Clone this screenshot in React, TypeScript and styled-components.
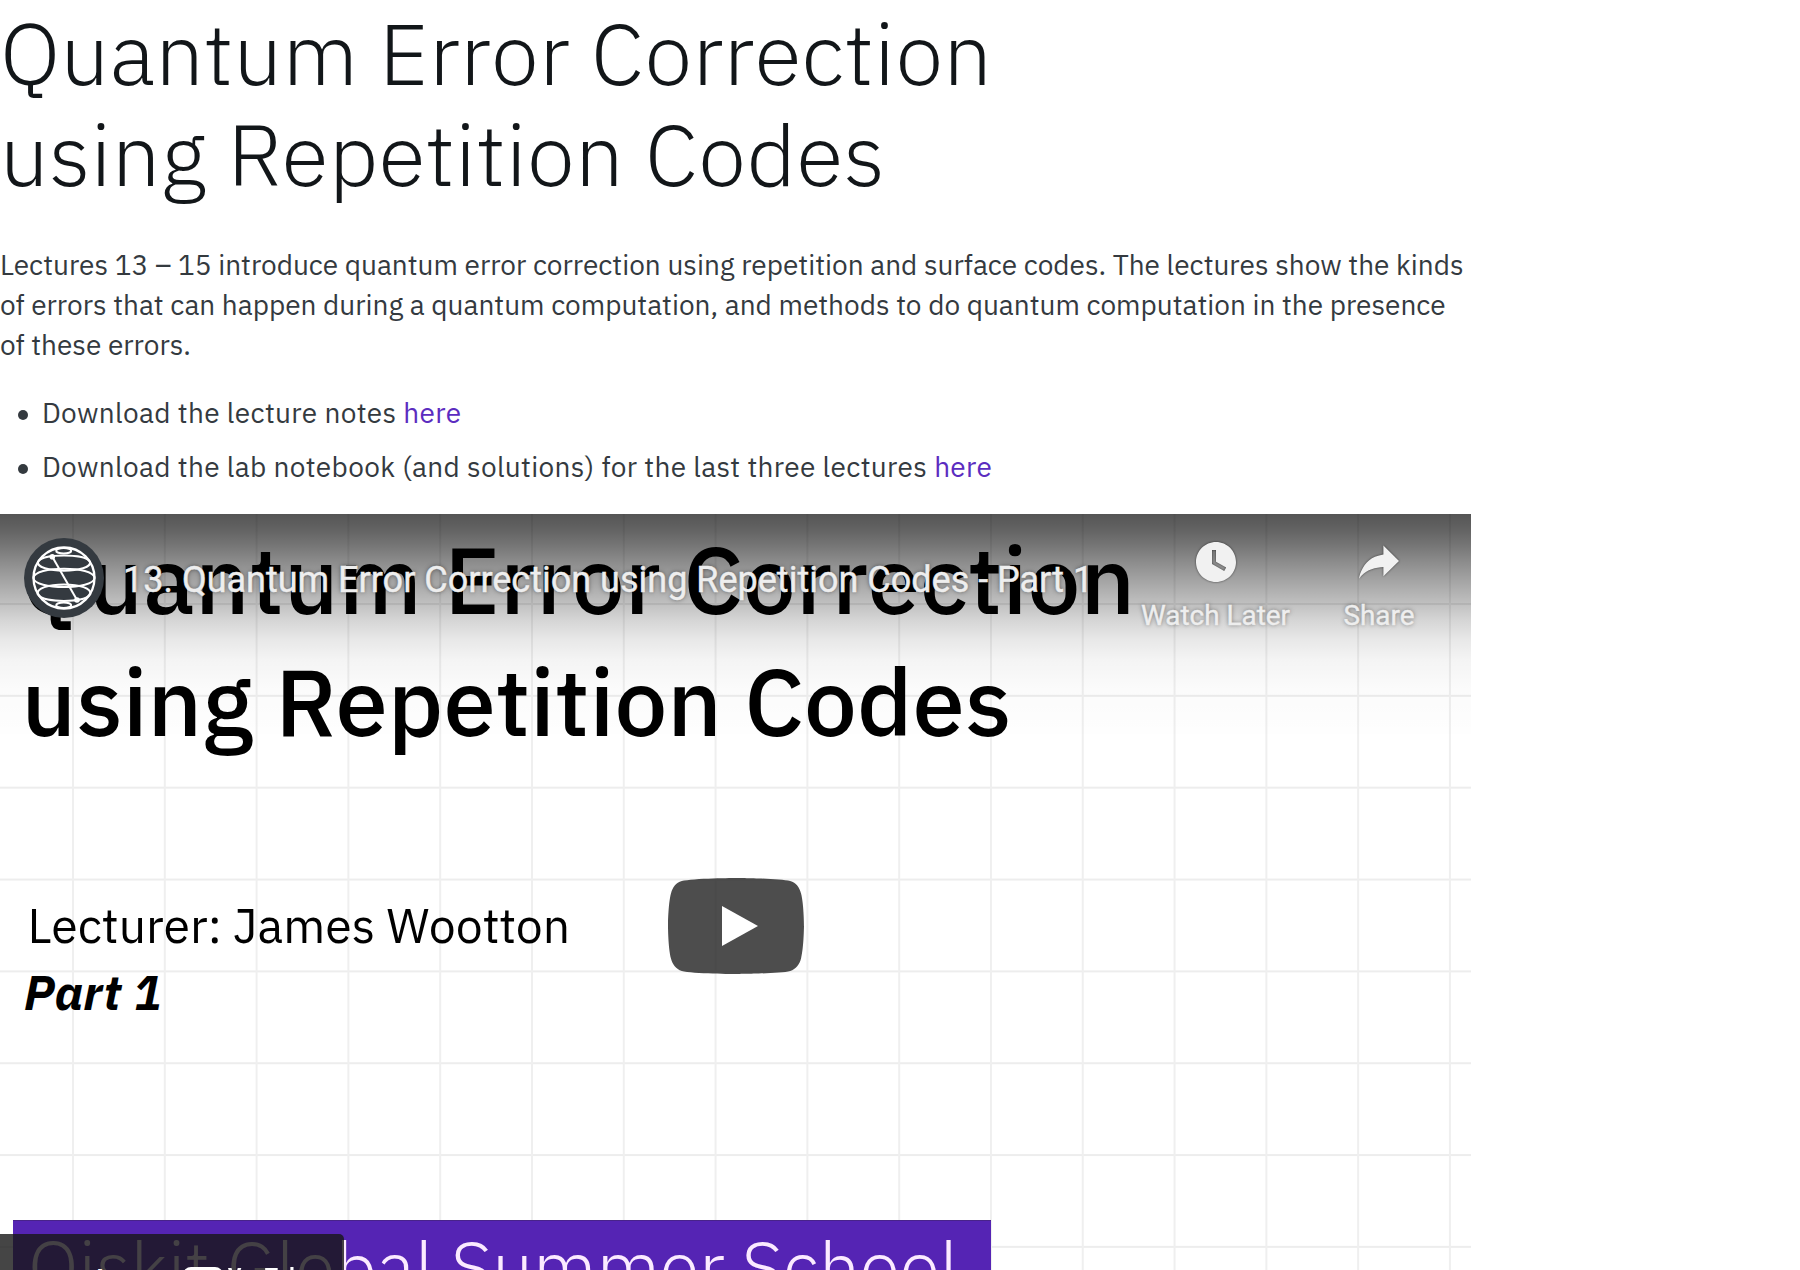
import React from "react";
import styled, { createGlobalStyle } from "styled-components";

const sans = `"IBM Plex Sans", "Noto Sans CJK JP", "Noto Sans", sans-serif`;
const playerFont = `Roboto, "Liberation Sans", sans-serif`;

const GlobalStyle = createGlobalStyle`
  * { box-sizing: border-box; }
  html, body { margin: 0; background: #fff; overflow: hidden; }
  h1, h2, p, ul { margin: 0; padding: 0; font-weight: inherit; }
`;

const Page = styled.main`
  display: flex;
  flex-direction: column;
  width: 1471px;
  height: 1270px;
  overflow: hidden;
  font-family: ${sans};
  font-size: 28px;
  line-height: 40px;
  color: #343a3f;
`;

const Line = styled.span<{ $spacing?: number }>`
  display: block;
  white-space: nowrap;
  letter-spacing: ${(p) => p.$spacing ?? 0}px;
`;

const Heading = styled.h1`
  margin-top: 2px;
  font-size: 86.4px;
  font-weight: 300;
  line-height: 101px;
  color: #121619;
`;

const Intro = styled.p`
  margin-top: 41px;
`;

const Links = styled.ul`
  display: flex;
  flex-direction: column;
  gap: 14px;
  margin-top: 28px;
  list-style: none;
`;

const LinkItem = styled.li`
  display: flex;
  align-items: center;
  padding-left: 18px;
  letter-spacing: 0.33px;
  white-space: pre;

  &::before {
    content: "";
    width: 10px;
    height: 10px;
    margin: 3px 14px 0 0;
    border-radius: 50%;
    background: #343a3f;
  }
`;

const Anchor = styled.a`
  color: #5b2cc0;
  text-decoration: none;
`;

const Player = styled.section`
  display: grid;
  flex: none;
  width: 1471px;
  height: 827px;
  margin-top: 27px;
  overflow: hidden;

  & > * {
    grid-area: 1 / 1;
  }
`;

const Slide = styled.div`
  display: flex;
  flex-direction: column;
  padding-top: 3.5px;
  color: #000;
  background-image: linear-gradient(90deg, #efefef 1.6px, transparent 1.6px),
    linear-gradient(#ededed 1.5px, transparent 1.5px);
  background-size: 91.8px 91.85px;
  background-position: 72px 89px;
`;

const SlideTitle = styled.h2`
  padding-left: 21.5px;
  font-size: 94.2px;
  font-weight: 500;
  line-height: 122.4px;
`;

const SlideByline = styled.div`
  margin: 129.7px 0 0 27.6px;
  font-size: 48.15px;
  line-height: 66.7px;
`;

const SlidePart = styled.div`
  padding-left: 24px;
  font-size: 48px;
  font-style: italic;
  font-weight: 700;
  line-height: 66.7px;
`;

const Banner = styled.div`
  width: 978px;
  height: 118px;
  margin: 194.5px 0 0 13px;
  padding-left: 15px;
  background: #5524b4;
  border-top: 1px solid #48238a;
  color: #fbeaff;
  font-size: 72.4px;
  font-weight: 300;
  line-height: 91px;
`;

const Shade = styled.div`
  height: 220px;
  background: linear-gradient(
    rgba(0, 0, 0, 0.667) 0,
    rgba(0, 0, 0, 0.61) 16px,
    rgba(0, 0, 0, 0.54) 31px,
    rgba(0, 0, 0, 0.45) 48px,
    rgba(0, 0, 0, 0.36) 66px,
    rgba(0, 0, 0, 0.25) 89px,
    rgba(0, 0, 0, 0.165) 106px,
    rgba(0, 0, 0, 0.09) 126px,
    rgba(0, 0, 0, 0.045) 146px,
    rgba(0, 0, 0, 0.014) 176px,
    rgba(0, 0, 0, 0.005) 220px
  );
`;

const TopBar = styled.header`
  display: flex;
  align-items: flex-start;
  height: 130px;
  padding: 24px 56px 0 24px;
  font-family: ${playerFont};
  color: #eee;
  text-shadow: 0 0 4px rgba(0, 0, 0, 0.5);
  -webkit-text-stroke: 0.4px #eee;
`;

const VideoTitle = styled.div`
  flex: 1;
  padding: 19px 0 0 19px;
  font-size: 36px;
  line-height: 46px;
  white-space: nowrap;
`;

const Action = styled.div<{ $width: number; $gap?: number }>`
  display: flex;
  flex-direction: column;
  align-items: center;
  width: ${(p) => p.$width}px;
  margin-left: ${(p) => p.$gap ?? 0}px;
  margin-top: -12px;
  font-size: 27.9px;
  line-height: 34px;
  white-space: nowrap;

  svg {
    display: block;
    overflow: visible;
    margin-bottom: 1px;
    filter: drop-shadow(0 0 1px rgba(0, 0, 0, 0.6));
  }
`;

const PlayButton = styled.div`
  place-self: center;
  width: 136px;
  height: 96px;
  margin-top: -3px;

  svg {
    display: block;
  }
`;

const WatchOn = styled.div`
  align-self: end;
  display: flex;
  align-items: center;
  width: 344px;
  height: 107px;
  padding: 0 0 13px 24px;
  border-top-right-radius: 5px;
  background: rgba(23, 23, 23, 0.8);
  color: #fff;
  font: 500 32px/40px ${playerFont};
  white-space: nowrap;

  svg {
    flex: none;
    margin: 0 5px 0 25px;
  }
`;

const WatchLabel = styled.span`
  flex: none;
  width: 134px;
`;

const Wordmark = styled.span`
  flex: none;
  font-weight: 700;
  font-size: 33px;
  transform: scaleX(0.65);
  transform-origin: left;
`;

function ChannelLogo() {
  return (
    <svg width="80" height="80" viewBox="0 0 80 80">
      <circle cx="40" cy="40" r="40" fill="#343a40" />
      <g fill="none" stroke="#fff" strokeWidth="2">
        <circle cx="40" cy="40" r="30.5" strokeWidth="2.3" />
        <ellipse cx="39.7" cy="12.8" rx="7.5" ry="2.8" />
        <ellipse cx="39.7" cy="67.2" rx="7.5" ry="2.8" />
        <path d="M14.5 23C20 15.5 60 15.5 65.5 23" />
        <path d="M14 23C10 36 70 36 66 23" />
        <path d="M9.5 40C10 27.5 70 27.5 70.5 40C70 52 10 52 9.5 40Z" />
        <path d="M14 57C8 43 72 43 66 57" />
        <path d="M14.5 57C20 65 60 65 65.5 57" />
        <path d="M28.3 18.7L53 62" />
      </g>
      <circle cx="28.3" cy="18.7" r="2.8" fill="#fff" />
      <circle cx="53" cy="62" r="2.8" fill="#fff" />
    </svg>
  );
}

function ClockIcon() {
  return (
    <svg width="72" height="72" viewBox="0 0 36 36" fill="#f1f1f1">
      <path d="M18,8 C12.47,8 8,12.47 8,18 C8,23.52 12.47,28 18,28 C23.52,28 28,23.52 28,18 C28,12.47 23.52,8 18,8 L18,8 Z M16,19.02 L16,12.00 L18,12.00 L18,17.86 L23.10,20.81 L22.10,22.54 L16,19.02 Z" />
    </svg>
  );
}

function ShareIcon() {
  return (
    <svg width="72" height="72" viewBox="0 0 36 36" fill="#f1f1f1">
      <path d="m 20.20,14.19 0,-4.45 7.79,7.79 -7.79,7.56 0,-4.56 C 16.27,20.69 12.10,21.81 9.34,24.76 8.80,25.13 7.60,27.29 8.12,25.65 9.08,21.32 11.80,17.18 15.98,15.38 c 1.33,-0.60 2.76,-0.98 4.21,-1.19 z" />
    </svg>
  );
}

export default function App() {
  return (
    <Page>
      <GlobalStyle />
      <Heading>
        <Line $spacing={0.3}>Quantum Error Correction</Line>
        <Line $spacing={0.33}>using Repetition Codes</Line>
      </Heading>
      <Intro>
        <Line>
          Lectures 13 – 15 introduce quantum error correction using repetition and surface codes. The lectures show the kinds
        </Line>
        <Line>
          of errors that can happen during a quantum computation, and methods to do quantum computation in the presence
        </Line>
        <Line>of these errors.</Line>
      </Intro>
      <Links>
        <LinkItem>
          {"Download the lecture notes "}
          <Anchor>here</Anchor>
        </LinkItem>
        <LinkItem>
          {"Download the lab notebook (and solutions) for the last three lectures "}
          <Anchor>here</Anchor>
        </LinkItem>
      </Links>
      <Player>
        <Slide>
          <SlideTitle>
            <Line $spacing={0.05}>Quantum Error Correction</Line>
            <Line>using Repetition Codes</Line>
          </SlideTitle>
          <SlideByline>Lecturer: James Wootton</SlideByline>
          <SlidePart>
            <Line $spacing={0.55}>Part 1</Line>
          </SlidePart>
          <Banner>Qiskit Global Summer School</Banner>
        </Slide>
        <Shade />
        <TopBar>
          <ChannelLogo />
          <VideoTitle>13. Quantum Error Correction using Repetition Codes - Part 1</VideoTitle>
          <Action $width={149}>
            <ClockIcon />
            Watch Later
          </Action>
          <Action $width={72} $gap={53}>
            <ShareIcon />
            Share
          </Action>
        </TopBar>
        <PlayButton>
          <svg width="136" height="96" viewBox="0 0 68 48">
            <path
              d="M66.52,7.74c-0.78-2.93-2.49-5.41-5.42-6.19C55.79,.13,34,0,34,0S12.21,.13,6.9,1.55 C3.97,2.33,2.27,4.81,1.48,7.74C.06,13.05,0,24,0,24s.06,10.95,1.48,16.26c.78,2.93,2.49,5.41,5.42,6.19 C12.21,47.87,34,48,34,48s21.79-.13,27.1-1.55c2.93-.78,4.64-3.26,5.42-6.19C67.94,34.95,68,24,68,24S67.94,13.05,66.52,7.74z"
              fill="#212121"
              fillOpacity="0.8"
            />
            <path d="M45,24 27,14 27,34" fill="#fff" />
          </svg>
        </PlayButton>
        <WatchOn>
          <WatchLabel>Watch on</WatchLabel>
          <svg width="40" height="29" viewBox="0 0 40 29">
            <rect width="40" height="29" rx="8" fill="#fff" />
            <path d="M16 8v12l11-6z" fill="#282828" />
          </svg>
          <Wordmark>YouTube</Wordmark>
        </WatchOn>
      </Player>
    </Page>
  );
}
